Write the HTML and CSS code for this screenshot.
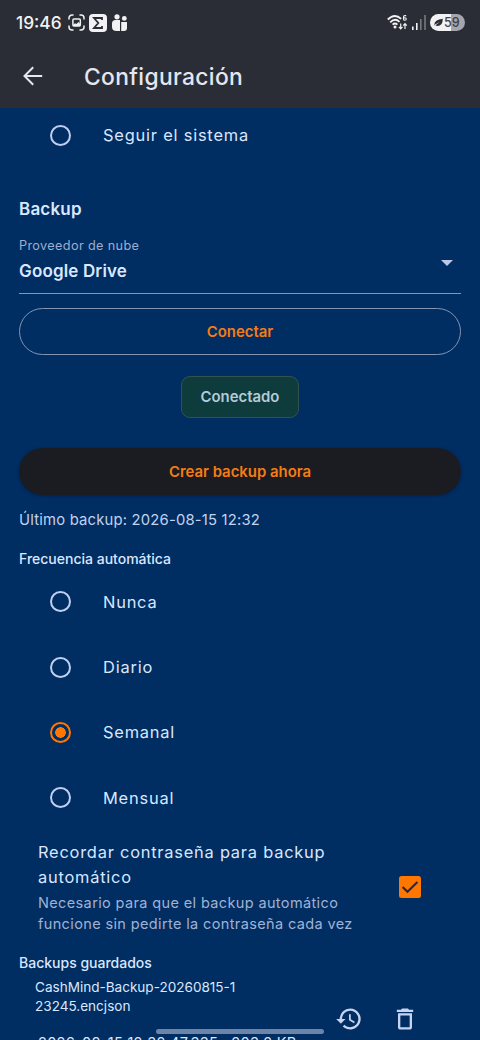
FILE: index.html
```html
<!DOCTYPE html>
<html lang="es">
<head>
<meta charset="utf-8">
<title>Configuración</title>
<link rel="stylesheet" href="styles.css">
</head>
<body>
<div class="screen">
  <header class="header">
    <div class="status">
      <span class="clock">19:46</span>
      <svg class="capture" width="17" height="17" viewBox="0 0 17 17" fill="none" stroke="#f2f2f4" stroke-width="1.5" stroke-linecap="round"><path d="M1 5V4a3 3 0 0 1 3-3h1M12 1h1a3 3 0 0 1 3 3v1M16 12v1a3 3 0 0 1-3 3h-1M5 16H4a3 3 0 0 1-3-3v-1"/><rect x="4.9" y="5" width="7.4" height="7" rx="1"/><path d="M5 11l2-1.8 1.5.8L10.5 8l1.7 2v2H5z" fill="#f2f2f4" stroke="none"/></svg>
      <svg class="sigma" width="18" height="18" viewBox="0 0 18 18"><rect width="18" height="18" rx="4" fill="#f2f2f4"/><path d="M13 6V4H5l4.3 5L5 14h8v-2" fill="none" stroke="#2b2d36" stroke-width="1.8"/></svg>
      <svg class="people" width="16" height="18" viewBox="0 0 16 18" fill="#f2f2f4"><circle cx="5" cy="2.8" r="2.6"/><path d="M0 9.5Q0 6 3.5 6H8v11H4.5Q0 17 0 13z"/><circle cx="12.3" cy="4.4" r="2.4"/><path d="M9.2 8h5.8v6q0 3-3 3H9.2z"/></svg>
      <svg class="wifi" width="21" height="17" viewBox="0 0 21 17" fill="none" stroke="#f2f2f4" stroke-width="1.8"><path d="M.8 5.5Q7.5-1.2 14.2 4.8M3.2 8.3Q8 3.5 12.5 7.8M5.6 10.7Q8 8.4 10.4 10.7"/><circle cx="8" cy="13" r="1.5" fill="#f2f2f4" stroke="none"/><path d="M13.7 9.5v5M11.9 12.9l1.8 1.9 1.8-1.9M18 15v-5M16.2 11.6L18 9.7l1.8 1.9" stroke-width="1.2"/><path d="M19.2 1.6h-1.4q-1.3 0-1.3 1.4v1.9q0 1.3 1.4 1.3t1.4-1.2-1.4-1.2-1.4.9" stroke-width="1.1"/></svg>
      <svg class="signal" width="14" height="15" viewBox="0 0 14 15"><path d="M0 11.5h1.6V15H0zM4 8h1.6v7H4z" fill="#f2f2f4"/><path d="M8 4h1.6v11H8zM12.2 0h1.6v15h-1.6z" fill="#777880"/></svg>
      <span class="battery"><svg width="9" height="9" viewBox="0 0 9 9"><path d="M.3 7.8Q-.2 1.5 8.8.8 8.8 8.3 3 8L1.5 7.2 5.8 4 1 6.5z" fill="#2b2d36"/></svg>59</span>
    </div>
    <div class="appbar">
      <svg class="back" width="20" height="20" viewBox="0 0 20 20" fill="none" stroke="#e3e7f1" stroke-width="2"><path d="M19.2 10H2M10.2 1.2L1.5 10l8.7 8.8"/></svg>
      <h1>Configuración</h1>
    </div>
  </header>
  <main>
    <div class="option first"><i class="radio"></i><span>Seguir el sistema</span></div>
    <h2>Backup</h2>
    <div class="field">
      <div class="field-text"><span class="label">Proveedor de nube</span><span class="value">Google Drive</span></div>
      <i class="caret"></i>
    </div>
    <div class="button outline">Conectar</div>
    <div class="chip">Conectado</div>
    <div class="button filled">Crear backup ahora</div>
    <p class="last">Último backup: 2026-08-15 12:32</p>
    <h3>Frecuencia automática</h3>
    <div class="option"><i class="radio"></i><span>Nunca</span></div>
    <div class="option"><i class="radio"></i><span>Diario</span></div>
    <div class="option"><i class="radio on"></i><span>Semanal</span></div>
    <div class="option"><i class="radio"></i><span>Mensual</span></div>
    <div class="remember">
      <div><p class="remember-title">Recordar contraseña para backup<br>automático</p>
      <p class="remember-note">Necesario para que el backup automático<br>funcione sin pedirte la contraseña cada vez</p></div>
      <svg class="check" width="22" height="22" viewBox="0 0 22 22"><rect width="22" height="22" rx="2.5" fill="#ff7600"/><path d="M3.6 11l4.9 4.8L18.4 6" fill="none" stroke="#242a40" stroke-width="2.1"/></svg>
    </div>
    <h3 class="saved">Backups guardados</h3>
    <div class="file">
      <div class="file-text"><p class="name">CashMind-Backup-20260815-1<br>23245.encjson</p><p class="meta">2026-08-15 12:32:47.335 · 203.2 KB</p></div>
      <svg class="history" width="28" height="28" viewBox="0 0 24 24" fill="#c8d3ef"><path d="M13 3a9 9 0 0 0-9 9H1l3.89 3.89.07.14L9 12H6a7 7 0 1 1 2.06 4.94l-1.42 1.42A9 9 0 1 0 13 3zm-1 5v5l4.28 2.54.72-1.21-3.5-2.08V8z"/></svg>
      <svg class="trash" width="28" height="28" viewBox="0 0 24 24" fill="#c8d3ef"><path d="M6 19c0 1.1.9 2 2 2h8c1.1 0 2-.9 2-2V7H6zM8 9h8v10H8zM15.5 4l-1-1h-5l-1 1H5v2h14V4z"/></svg>
    </div>
  </main>
  <div class="homebar"></div>
</div>
</body>
</html>
```
FILE: styles.css
```css
* { box-sizing: border-box; margin: 0; padding: 0; }
body { background: #002d62; font-family: Inter, "Liberation Sans", sans-serif; color: #dae7ff; }
.screen { position: relative; width: 480px; height: 1040px; overflow: hidden; background: #002d62; }
.header { height: 108px; background: #2b2d36; }
.status { height: 45px; display: flex; align-items: center; padding-left: 16px; }
.clock { width: 52px; font-size: 17.3px; font-weight: 500; color: #f2f2f4; white-space: nowrap; }
.sigma { margin-left: 4px; }
.people { margin-left: 5px; }
.wifi { margin-left: 259px; }
.signal { margin-left: 4px; }
.battery { display: flex; align-items: center; gap: 1px; width: 35px; height: 17px; margin-left: 4px; padding-left: 4px; border-radius: 9px; background: linear-gradient(90deg, #f2f2f4 60%, #a5a6ab 60%); color: #40424a; font-size: 12.5px; font-weight: 500; }
.appbar { height: 61px; display: flex; align-items: center; padding-left: 23px; }
h1 { margin: 3px 0 0 41px; font-size: 22.8px; font-weight: 550; line-height: 30px; letter-spacing: .35px; color: #e3e7f1; white-space: nowrap; }
main { padding: 0 19px; }
.option { height: 65.4px; display: flex; align-items: center; padding-left: 31px; font-size: 16.4px; letter-spacing: .8px; white-space: nowrap; }
.option.first { height: 54px; }
.radio { width: 21px; height: 21px; margin-right: 32px; border: 2.3px solid #c0cfef; border-radius: 50%; }
.radio.on { border-color: #ff7600; background: radial-gradient(circle, #ff7600 0 5px, transparent 5.6px); }
h2 { margin-top: 30px; height: 34px; line-height: 35px; font-size: 17px; font-weight: 600; letter-spacing: .2px; }
.field { height: 68px; display: flex; justify-content: space-between; border-bottom: 1px solid #8794ae; padding-right: 8px; }
.field-text { display: flex; flex-direction: column; padding-top: 10px; white-space: nowrap; }
.label { height: 20px; line-height: 20px; font-size: 12.7px; letter-spacing: .35px; color: #9cafd0; }
.value { margin-top: 2px; line-height: 27px; font-size: 17px; font-weight: 600; letter-spacing: .15px; }
.caret { margin-top: 34px; width: 12px; height: 6px; background: #b9c9e7; clip-path: polygon(0 0, 100% 0, 50% 100%); }
.button { height: 47px; display: flex; align-items: center; justify-content: center; border-radius: 24px; color: #f57c14; font-size: 14.9px; font-weight: 600; white-space: nowrap; }
.outline { margin-top: 14px; border: 1px solid #8495b4; }
.chip { margin: 21px auto 30px; width: 118px; height: 42px; display: flex; align-items: center; justify-content: center; border: 1px solid #34514f; border-radius: 9px; background: #0e3b3c; color: #b5ccd8; font-size: 14.9px; font-weight: 600; }
.filled { background: #1b1c22; box-shadow: 0 1px 3px #00153980; }
.last { margin-top: 13px; height: 24px; line-height: 24px; font-size: 14.8px; letter-spacing: .2px; color: #c2d2ef; white-space: nowrap; }
h3 { margin-top: 15px; height: 22px; line-height: 23px; font-size: 14px; font-weight: 550; white-space: nowrap; }
.remember { display: flex; justify-content: space-between; align-items: center; margin-top: 9px; padding: 0 40px 0 19px; white-space: nowrap; }
.remember-title { font-size: 16.4px; line-height: 25.7px; letter-spacing: .78px; }
.remember-note { margin-top: 1px; font-size: 14.5px; line-height: 21px; letter-spacing: .37px; color: #a0b2d4; }
.saved { margin-top: 17px; }
.file { display: flex; padding-left: 16px; white-space: nowrap; }
.file-text { width: 300px; }
.name { margin-top: 5px; font-size: 13.55px; line-height: 19px; }
.meta { margin: 18px 0 0 3px; font-size: 14.6px; line-height: 19px; letter-spacing: .25px; }
.history, .trash { margin-top: 32px; }
.trash { margin-left: 28px; }
.homebar { position: absolute; left: 156px; top: 1029px; width: 168px; height: 5px; border-radius: 3px; background: #6d84a9; }
```
